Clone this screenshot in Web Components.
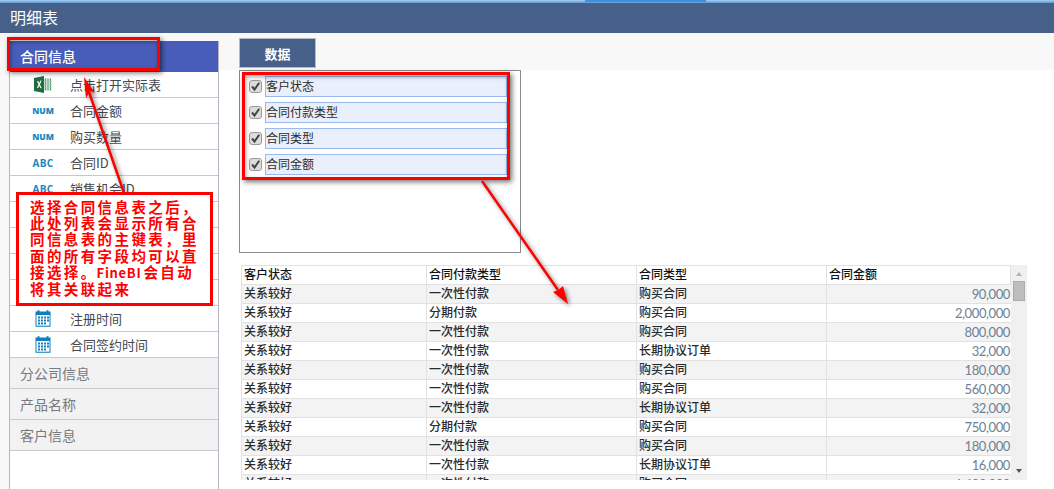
<!DOCTYPE html>
<html lang="zh">
<head>
<meta charset="utf-8">
<title>明细表</title>
<style>
  html, body { margin: 0; height: 489px; overflow: hidden; background: #fff; }
  body { font-family: "Noto Sans CJK SC", "Liberation Sans", sans-serif; position: relative; }
  .main { display: flex; height: 456px; }
  note-layer span { font-size: 13px; letter-spacing: .7px; margin: 0 2px 0 -1px; }
</style>
</head>
<body>
<app-header>明细表</app-header>
<div class="main">
  <side-panel>
    <side-group active>合同信息</side-group>
    <side-field icon="excel">点击打开实际表</side-field>
    <side-field icon="num">合同金额</side-field>
    <side-field icon="num">购买数量</side-field>
    <side-field icon="abc">合同ID</side-field>
    <side-field icon="abc">销售机会ID</side-field>
    <side-field></side-field>
    <side-field></side-field>
    <side-field></side-field>
    <side-field></side-field>
    <side-field icon="date">注册时间</side-field>
    <side-field icon="date">合同签约时间</side-field>
    <side-group>分公司信息</side-group>
    <side-group>产品名称</side-group>
    <side-group>客户信息</side-group>
  </side-panel>
  <data-view>
    <span slot="tab">数据</span>
    <field-picker slot="picker">
      <picker-row>客户状态</picker-row>
      <picker-row>合同付款类型</picker-row>
      <picker-row>合同类型</picker-row>
      <picker-row>合同金额</picker-row>
    </field-picker>
    <data-grid slot="grid"></data-grid>
  </data-view>
</div>
<note-layer>选择合同信息表之后，<br>此处列表会显示所有合<br>同信息表的主键表，里<br>面的所有字段均可以直<br>接选择。<span>FineBI</span>会自动<br>将其关联起来</note-layer>

<script>
const gridRows = [
  ["关系较好", "一次性付款", "购买合同", "90,000"],
  ["关系较好", "分期付款", "购买合同", "2,000,000"],
  ["关系较好", "一次性付款", "购买合同", "800,000"],
  ["关系较好", "一次性付款", "长期协议订单", "32,000"],
  ["关系较好", "一次性付款", "购买合同", "180,000"],
  ["关系较好", "一次性付款", "购买合同", "560,000"],
  ["关系较好", "一次性付款", "长期协议订单", "32,000"],
  ["关系较好", "分期付款", "购买合同", "750,000"],
  ["关系较好", "一次性付款", "购买合同", "180,000"],
  ["关系较好", "一次性付款", "长期协议订单", "16,000"],
  ["关系较好", "一次性付款", "购买合同", "1,400,000"],
];
const gridHead = ["客户状态", "合同付款类型", "合同类型", "合同金额"];

const fieldIcons = {
  excel: `<svg width="18" height="17" viewBox="0 0 18 17">
      <rect x="9" y="2.5" width="8.5" height="12" fill="#cfe3d6"/>
      <path d="M11.5 2.5v12M14 2.5v12M16.5 2.5v12" stroke="#5f9c78" stroke-width="1"/>
      <path d="M9 5.5h8.5M9 8.500h8.500M9 11.500h8.500" stroke="#a9cdb6" stroke-width=".7"/>
      <path d="M0 2 10 0v17L0 15z" fill="#1f6e43"/>
      <path d="M3 5.200 4.300 5 5.200 7.300 6.200 4.800 7.600 4.600 5.900 8.400 7.700 12.300 6.300 12.100 5.200 9.600 4.200 11.900 2.900 11.700 4.500 8.400z" fill="#fff"/>
    </svg>`,
  date: `<svg width="16" height="17" viewBox="0 0 16 17">
      <path d="M.5 1.500h2V.3h2v1.200h7V.3h2v1.200h2v15.200H.5z" fill="#0f7fbf"/>
      <rect x="1.500" y="5" width="13" height="10.700" fill="#fff"/>
      <path d="M3 6.500h2v2H3zM6 6.500h2v2H6zM9 6.500h2v2H9zM12 6.500h2v2h-2zM3 9.500h2v2H3zM6 9.500h2v2H6zM9 9.500h2v2H9zM12 9.500h2v2h-2zM3 12.500h2v2H3zM6 12.500h2v2H6zM9 12.500h2v2H9z" fill="#0f7fbf"/>
    </svg>`,
  num: "NUM",
  abc: "ABC",
};

class AppHeader extends HTMLElement {
  constructor() {
    super();
    this.attachShadow({ mode: "open" });
    this.shadowRoot.innerHTML = `
      <style>
        :host { display: block; height: 33px; background: #466089; color: #fff; font-size: 16px; }
        .strip { height: 3px; background: linear-gradient(#a9cdee, #5d9ad8); }
        .strip i { display: block; width: 121px; margin-left: 585px; background: #3f90e4; height: 2px; }
        .title { height: 30px; line-height: 29px; padding-left: 10px; }
      </style>
      <div class="strip"><i></i></div>
      <div class="title"><slot></slot></div>
    `;
  }
}

class SidePanel extends HTMLElement {
  constructor() {
    super();
    this.attachShadow({ mode: "open" });
    this.shadowRoot.innerHTML = `
      <style>
        :host { display: block; flex: none; width: 219px; box-sizing: border-box; padding: 8px 0 0 9px; background: #f8f8f8; }
        .list { height: 100%; background: #fff; border-left: 1px solid #b9b4c2; border-right: 1px solid #b9b4c2; box-sizing: border-box; }
      </style>
      <div class="list"><slot></slot></div>
    `;
  }
}

class SideGroup extends HTMLElement {
  constructor() {
    super();
    this.attachShadow({ mode: "open" });
    this.shadowRoot.innerHTML = `
      <style>
        :host { display: block; height: 31px; box-sizing: border-box; padding-left: 10px; line-height: 30px; font-size: 14px; color: #77797f; background: #f2f2f2; border-bottom: 1px solid #c8c8c8; }
        :host([active]) { line-height: 31px; color: #fff; background: #485db9; border-bottom: 0; font-weight: 500; }
      </style>
      <slot></slot>
    `;
  }
}

class SideField extends HTMLElement {
  constructor() {
    super();
    this.attachShadow({ mode: "open" });
    const kind = this.getAttribute("icon");
    const isText = kind === "num" || kind === "abc";
    this.shadowRoot.innerHTML = `
      <style>
        :host { display: flex; align-items: center; height: 26px; box-sizing: border-box; border-bottom: 1px solid #c8c8c8; font-size: 13px; color: #44474d; }
        .icon { flex: none; width: 40px; margin-left: 13px; display: flex; justify-content: center; }
        .icon.text { font: 800 8.500px "Open Sans", sans-serif; color: #1b86bd; }
        .icon.abc { font-size: 10px; letter-spacing: .3px; font-weight: 700; }
        svg { display: block; }
      </style>
      <span class="icon ${isText ? "text" : ""} ${kind === "abc" ? "abc" : ""}">${fieldIcons[kind] || ""}</span>
      <span class="label" style="margin-left:7px"><slot></slot></span>
    `;
  }
}

class DataView extends HTMLElement {
  constructor() {
    super();
    this.attachShadow({ mode: "open" });
    this.shadowRoot.innerHTML = `
      <style>
        :host { display: block; flex: 1; min-width: 0; }
        .bar { height: 37px; box-sizing: border-box; padding: 5px 0 0 20px; background: #f8f8f8; }
        .tab { width: 77px; height: 30px; box-sizing: border-box; border: 1px solid #b4bcc8; background: #466089; color: #fff; font-size: 13px; font-weight: 700; line-height: 29px; text-align: center; }
        .picker { padding-left: 20px; }
        .grid { padding: 12px 0 0 22px; }
      </style>
      <div class="bar"><div class="tab"><slot name="tab"></slot></div></div>
      <div class="picker"><slot name="picker"></slot></div>
      <div class="grid"><slot name="grid"></slot></div>
    `;
  }
}

class FieldPicker extends HTMLElement {
  constructor() {
    super();
    this.attachShadow({ mode: "open" });
    this.shadowRoot.innerHTML = `
      <style>
        :host { display: flex; flex-direction: column; gap: 5px; width: 282px; height: 183px; box-sizing: border-box; padding: 5px 13px 0 9px; border: 1px solid #8a8a8a; background: #fff; }
      </style>
      <slot></slot>
    `;
  }
}

class PickerRow extends HTMLElement {
  constructor() {
    super();
    this.attachShadow({ mode: "open" });
    this.shadowRoot.innerHTML = `
      <style>
        :host { display: flex; align-items: center; gap: 3px; height: 21px; }
        .box { flex: none; width: 13px; height: 13px; box-sizing: border-box; border: 1px solid #9a9a9a; border-radius: 3px; background: #dcdcdc; }
        svg { display: block; }
        .label { flex: 1; height: 21px; box-sizing: border-box; border: 1px solid #9cb9ee; background: #e9effb; font-size: 12px; line-height: 18px; color: #2c2c2c; }
      </style>
      <span class="box"><svg width="11" height="11" viewBox="0 0 11 11"><path d="M2 5.500 4.500 8.500 9.200 1.800" fill="none" stroke="#444" stroke-width="2"/></svg></span>
      <span class="label"><slot></slot></span>
    `;
  }
}

class DataGrid extends HTMLElement {
  constructor() {
    super();
    this.attachShadow({ mode: "open" });
    this.render();
  }

  render() {
    const head = gridHead.map((text) => `<div class="cell head">${text}</div>`).join("");
    const rows = gridRows.map((row, i) => row.map((text, col) =>
      `<div class="cell ${i % 2 ? "" : "odd"} ${col === 3 ? "num" : ""}">${text}</div>`).join("")).join("");
    this.shadowRoot.innerHTML = `
      <style>
        :host { display: flex; width: 786px; height: 215px; overflow: hidden; }
        .table { flex: none; width: 770px; display: grid; grid-template-columns: 186px 210px 190px 184px; grid-auto-rows: 19px; align-content: start; border-top: 1px solid #e2e2e2; box-sizing: border-box; height: 215px; overflow: hidden; font-size: 12px; font-weight: 500; color: #2a2a2a; }
        .cell { box-sizing: border-box; padding-left: 2px; line-height: 15px; border-bottom: 1px solid #e2e2e2; border-right: 1px solid #e2e2e2; white-space: nowrap; overflow: hidden; background: #fff; }
        .cell:nth-child(4n+1) { border-left: 1px solid #e2e2e2; }
        .head { color: #111; }
        .odd { background: #f3f3f3; }
        .num { text-align: right; padding: 0 1px 0 0; font: 13px/18px Lato, sans-serif; letter-spacing: -.4px; color: #6d8196; border-right: 0; }
        .bar { flex: none; width: 16px; background: #f0f0f0; display: flex; flex-direction: column; align-items: center; }
        .up, .down { width: 0; height: 0; border-left: 3.500px solid transparent; border-right: 3.500px solid transparent; }
        .up { margin-top: 7px; border-bottom: 4px solid #b5b5b5; }
        .thumb { width: 12px; height: 20px; margin-top: 5px; box-sizing: border-box; background: #bdbdbd; border: 1px solid #adadad; }
        .down { margin-top: auto; margin-bottom: 7px; border-top: 4px solid #555; }
      </style>
      <div class="table">${head}${rows}</div>
      <div class="bar"><span class="up"></span><span class="thumb"></span><span class="down"></span></div>
    `;
  }
}

// red markup drawn on top of the screenshot
class NoteLayer extends HTMLElement {
  constructor() {
    super();
    this.attachShadow({ mode: "open" });
    this.shadowRoot.innerHTML = `
      <style>
        :host { display: block; position: absolute; inset: 0; pointer-events: none; }
        .mark { position: absolute; box-sizing: border-box; border: 3px solid #f00; box-shadow: 2px 2px 5px rgba(0,0,0,.55), inset 1px 2px 4px rgba(0,0,0,.35); }
        .head { left: 7px; top: 37px; width: 153px; height: 34px; }
        .fields { left: 242px; top: 72px; width: 268px; height: 108px; }
        .note { position: absolute; left: 16px; top: 192px; width: 197px; height: 114px; box-sizing: border-box; border: 3px solid #f00; background: #fff; padding: 4px 0 0 11px; color: #f00; font: 700 14.500px/16.200px "Noto Sans CJK SC", sans-serif; letter-spacing: 2.400px; white-space: nowrap; }
        svg { position: absolute; left: 0; top: 0; }
      </style>
      <div class="mark head"></div>
      <div class="mark fields"></div>
      <svg width="1054" height="489" viewBox="0 0 1054 489" style="filter: drop-shadow(2px 2px 2px rgba(0,0,0,.5))">
        <path d="M124 193 89 92" stroke="#f00" stroke-width="2.500"/>
        <path d="M84 77 95 93 90.500 91 86 98z" fill="#f00"/>
        <path d="M482 181 558 290" stroke="#f00" stroke-width="2.500"/>
        <path d="M568 304 553 292 558.500 290 563 286z" fill="#f00"/>
      </svg>
      <div class="note"><slot></slot></div>
    `;
  }
}

customElements.define("app-header", AppHeader);
customElements.define("side-panel", SidePanel);
customElements.define("side-group", SideGroup);
customElements.define("side-field", SideField);
customElements.define("data-view", DataView);
customElements.define("field-picker", FieldPicker);
customElements.define("picker-row", PickerRow);
customElements.define("data-grid", DataGrid);
customElements.define("note-layer", NoteLayer);
</script>
</body>
</html>
